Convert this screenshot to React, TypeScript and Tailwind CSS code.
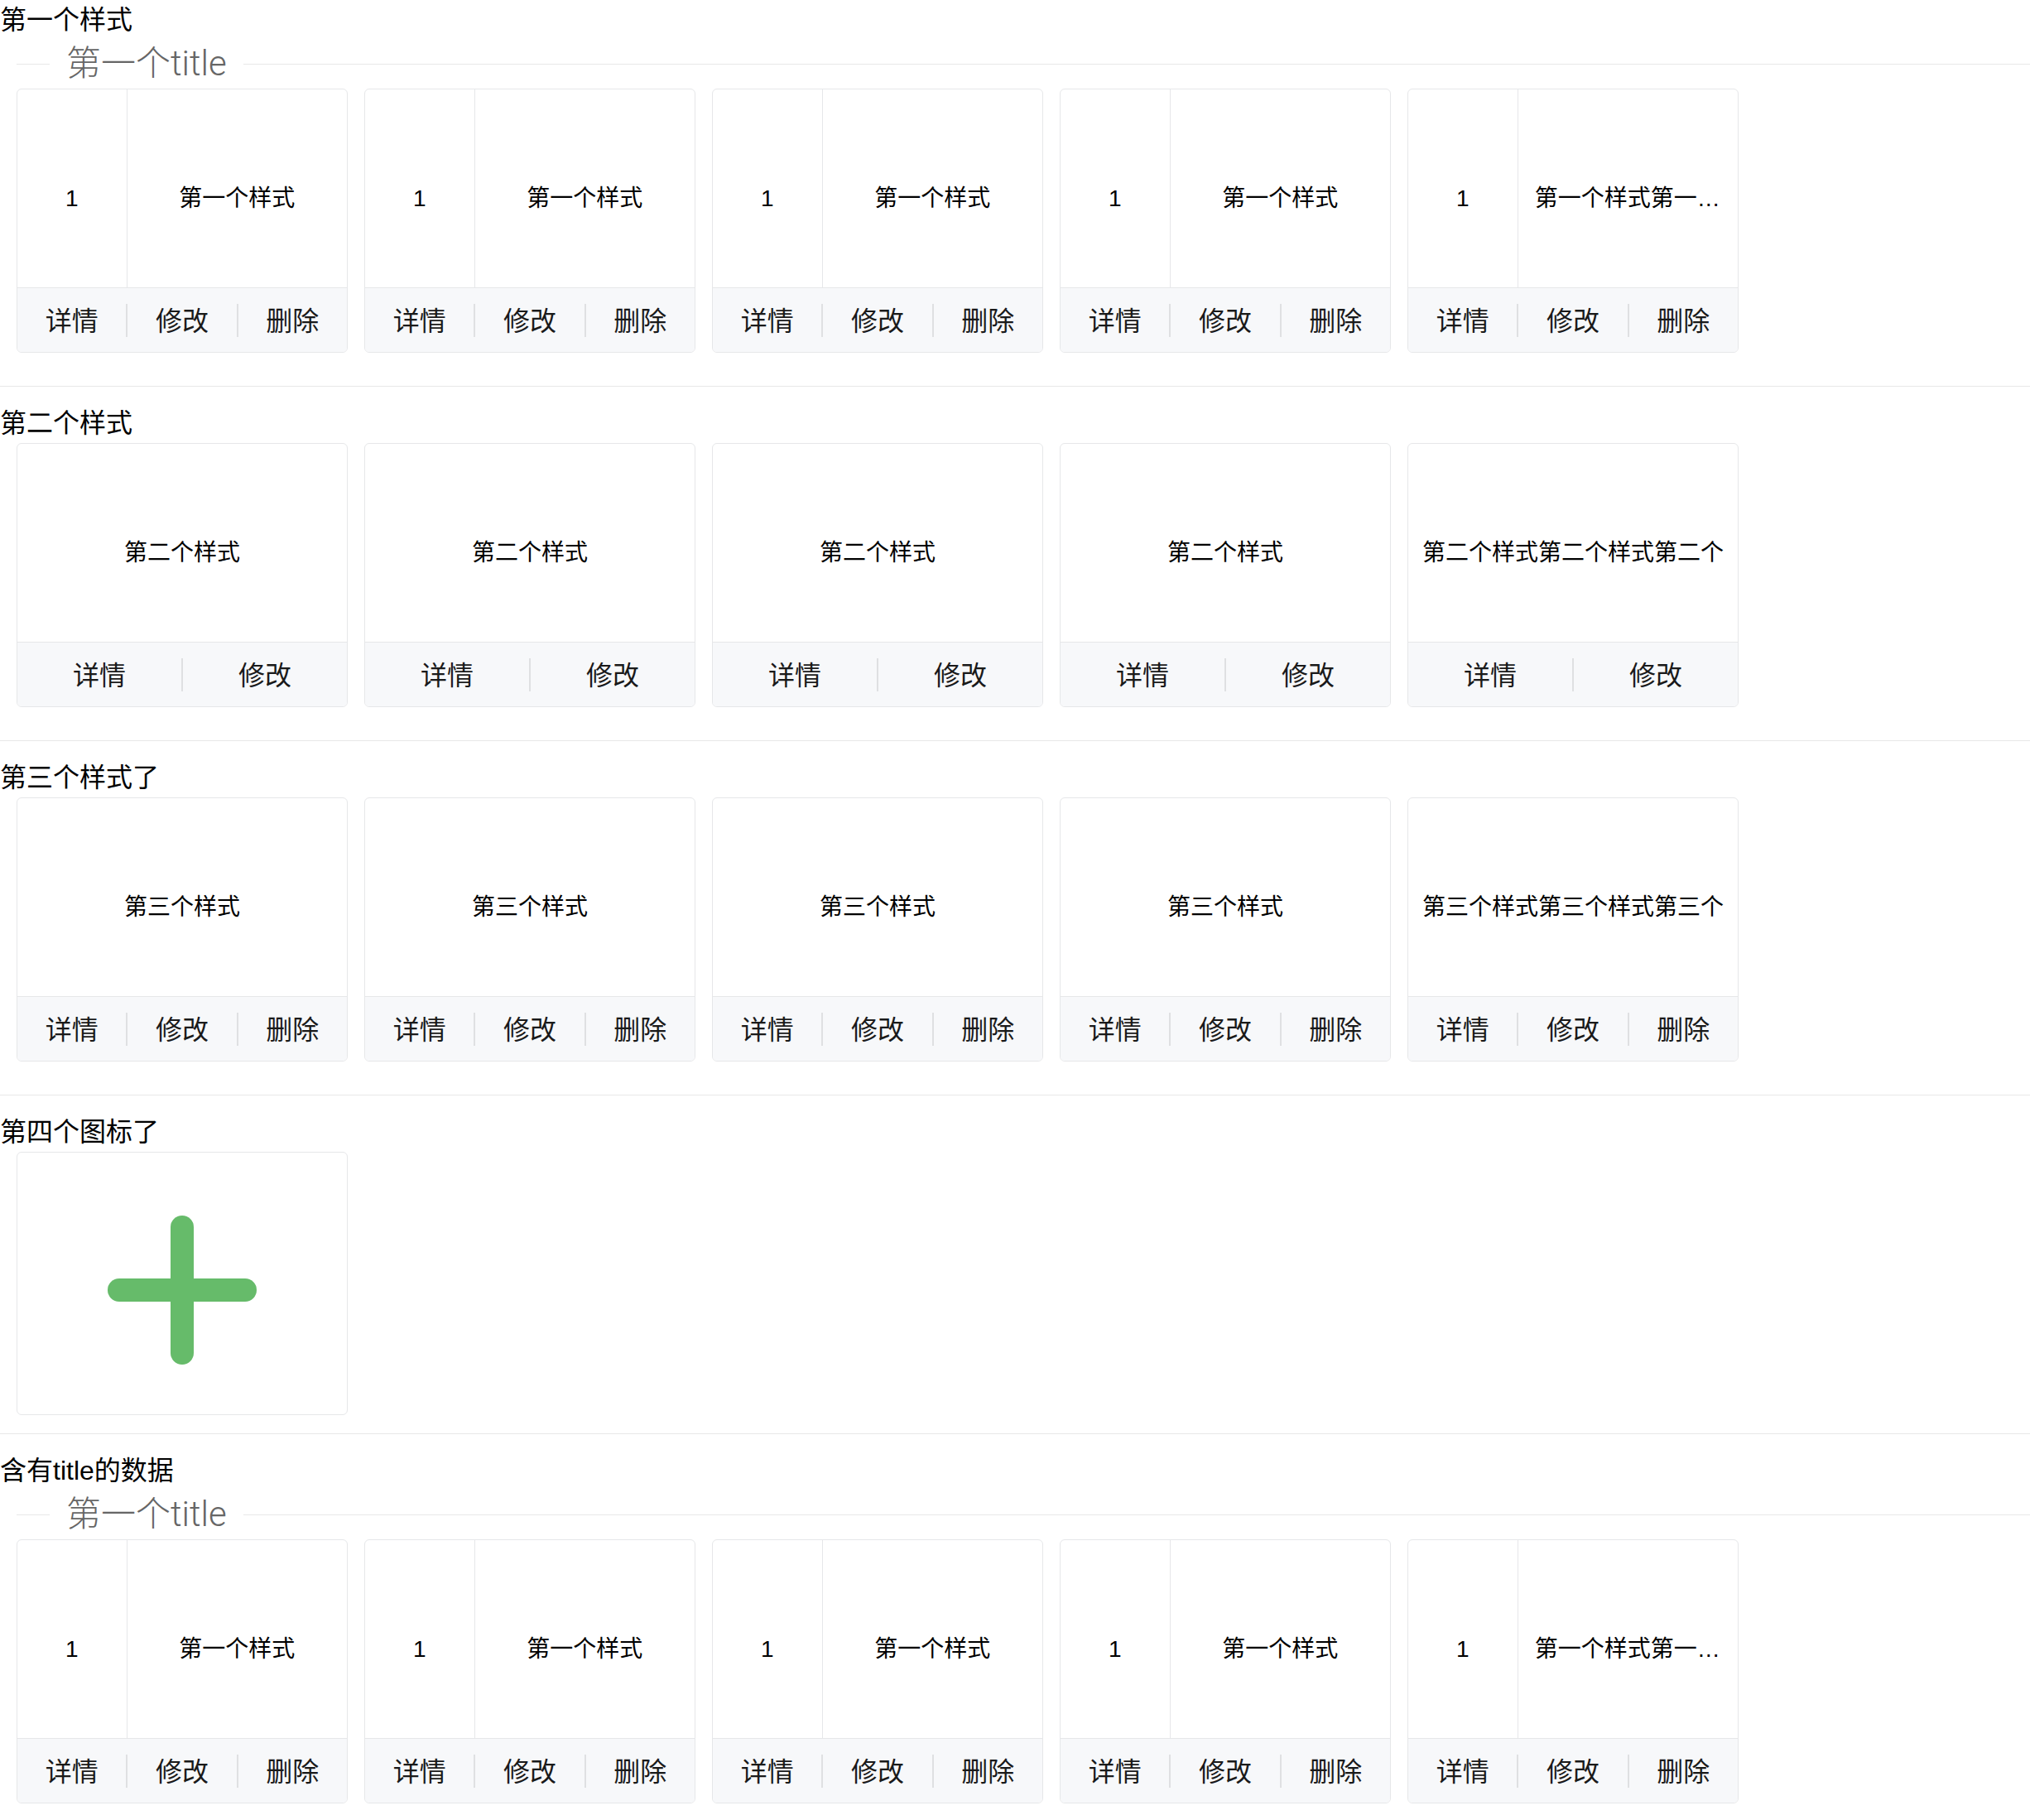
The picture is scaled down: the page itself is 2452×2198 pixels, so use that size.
import React from "react";

const BTN3 = ["详情", "修改", "删除"];
const BTN2 = ["详情", "修改"];

function Buttons({ items }: { items: string[] }) {
  return (
    <div className="flex-1 border-t border-[#e6e7e9] bg-[#f7f8fa] flex items-center">
      {items.map((b, i) => (
        <React.Fragment key={b}>
          {i > 0 && <span className="w-[2px] h-10 shrink-0 bg-[#dfe0e2]" />}
          <div className="flex-1 flex items-center justify-center pt-[3px] text-[32px] leading-[1.4] text-[#1a1a1a]">
            {b}
          </div>
        </React.Fragment>
      ))}
    </div>
  );
}

function CardShell({ children }: { children: React.ReactNode }) {
  return (
    <div className="w-[400px] h-[319px] shrink-0 flex flex-col rounded-[6px] border border-[#e6e7e9] overflow-hidden bg-white">
      {children}
    </div>
  );
}

function CardA({ text }: { text: string }) {
  return (
    <CardShell>
      <div className="h-[239px] flex text-[28px] leading-[1.4] text-black">
        <div className="w-1/3 border-r border-[#e6e7e9] flex items-center justify-center pt-6">1</div>
        <div className="flex-1 min-w-0 flex items-center justify-center pt-6 px-5">
          <span className="truncate block leading-[1.4]">{text}</span>
        </div>
      </div>
      <Buttons items={BTN3} />
    </CardShell>
  );
}

function CardB({ text, buttons }: { text: string; buttons: string[] }) {
  return (
    <CardShell>
      <div className="h-[239px] flex items-center justify-center pt-6 px-[10px] text-[28px] leading-[1.4] text-black whitespace-nowrap">
        {text}
      </div>
      <Buttons items={buttons} />
    </CardShell>
  );
}

function PlusCard() {
  return (
    <div className="w-[400px] h-[318px] shrink-0 rounded-[6px] border border-[#e6e7e9] bg-white flex items-center justify-center pt-4">
      <svg width="180" height="180" viewBox="0 0 180 180">
        <line x1="14" y1="90" x2="166" y2="90" stroke="#66bb6a" strokeWidth="28" strokeLinecap="round" />
        <line x1="90" y1="14" x2="90" y2="166" stroke="#66bb6a" strokeWidth="28" strokeLinecap="round" />
      </svg>
    </div>
  );
}

function Heading({ children }: { children: React.ReactNode }) {
  return <div className="text-[32px] leading-[48px] text-black">{children}</div>;
}

function Legend({ text }: { text: string }) {
  return (
    <div className="h-[59px] flex items-center">
      <span className="ml-5 w-10 h-px bg-[#e8e8e8]" />
      <span className="px-5 text-[42px] leading-[1.3] font-light text-[#666] whitespace-nowrap font-['Roboto','Noto_Sans_CJK_SC',sans-serif]">
        {text}
      </span>
      <span className="flex-1 h-px bg-[#e8e8e8]" />
    </div>
  );
}

function Row({ children }: { children: React.ReactNode }) {
  return <div className="flex gap-5 pl-5">{children}</div>;
}

const s1 = ["第一个样式", "第一个样式", "第一个样式", "第一个样式", "第一个样式第一个样式第一个样式"];
const s2 = ["第二个样式", "第二个样式", "第二个样式", "第二个样式", "第二个样式第二个样式第二个"];
const s3 = ["第三个样式", "第三个样式", "第三个样式", "第三个样式", "第三个样式第三个样式第三个"];

export default function App() {
  return (
    <div className="min-h-screen bg-white font-['Liberation_Sans','Noto_Sans_CJK_SC',sans-serif]">
      <section className="pb-10 border-b border-[#e8e8e8]">
        <Heading>第一个样式</Heading>
        <Legend text="第一个title" />
        <Row>
          {s1.map((t, i) => (
            <CardA key={i} text={t} />
          ))}
        </Row>
      </section>
      <section className="pt-5 pb-10 border-b border-[#e8e8e8]">
        <Heading>第二个样式</Heading>
        <Row>
          {s2.map((t, i) => (
            <CardB key={i} text={t} buttons={BTN2} />
          ))}
        </Row>
      </section>
      <section className="pt-5 pb-10 border-b border-[#e8e8e8]">
        <Heading>第三个样式了</Heading>
        <Row>
          {s3.map((t, i) => (
            <CardB key={i} text={t} buttons={BTN3} />
          ))}
        </Row>
      </section>
      <section className="pt-5 pb-[22px] border-b border-[#e8e8e8]">
        <Heading>第四个图标了</Heading>
        <Row>
          <PlusCard />
        </Row>
      </section>
      <section className="pt-5 pb-10">
        <Heading>含有title的数据</Heading>
        <Legend text="第一个title" />
        <Row>
          {s1.map((t, i) => (
            <CardA key={i} text={t} />
          ))}
        </Row>
      </section>
    </div>
  );
}
